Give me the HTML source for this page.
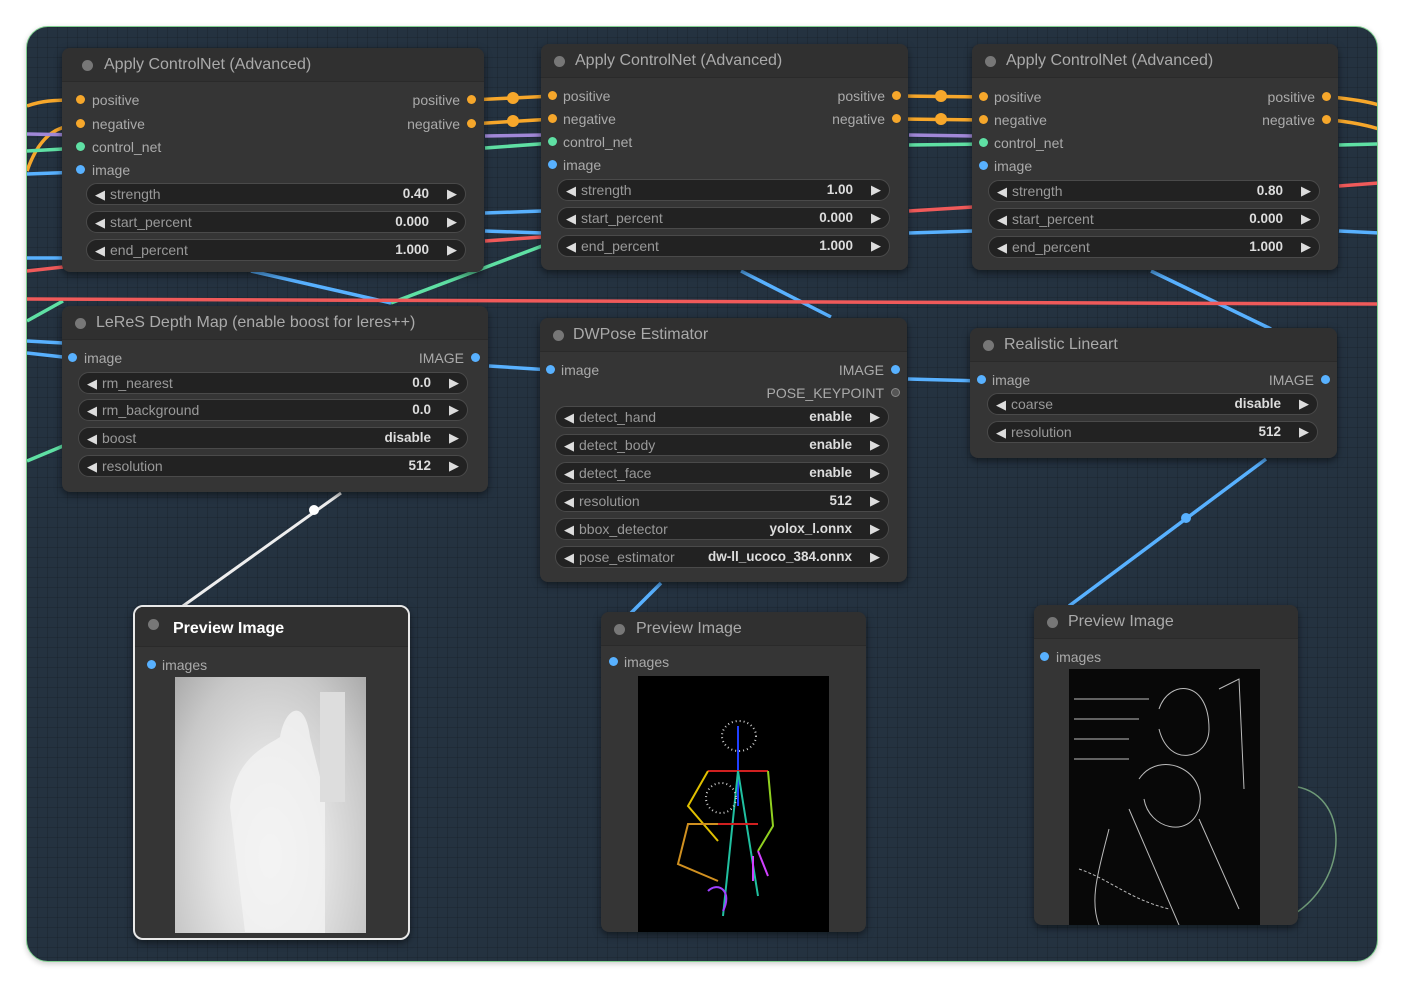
<!DOCTYPE html>
<html><head><meta charset="utf-8"><style>
*{margin:0;padding:0;box-sizing:border-box}
body{width:1404px;height:988px;background:#fff;position:relative;overflow:hidden;font-family:"Liberation Sans",Arial,sans-serif}
#fr{position:absolute;left:26px;top:26px;width:1352px;height:936px;border-radius:22px;border:1px solid #7fcf8f;overflow:hidden;background-color:#243240;
background-image:linear-gradient(rgba(0,0,0,.12) 1px,transparent 1px),linear-gradient(90deg,rgba(0,0,0,.12) 1px,transparent 1px);background-size:10px 10px;box-shadow:0 2px 6px rgba(0,0,0,.2)}
svg.wires{position:absolute;left:0;top:0}
.n{position:absolute;background:#353535;border-radius:8px;box-shadow:0 3px 8px rgba(0,0,0,.5)}
.t{height:34px;background:#303030;border-radius:8px 8px 0 0;border-bottom:1px solid #2a2a2a;color:#aaa;font-size:16px;line-height:34px;padding-left:42px;position:relative}
.t:before{content:"";position:absolute;left:20px;top:12px;width:11px;height:11px;border-radius:50%;background:#777}
.t.s:before{left:13px}
.r{position:absolute;font-size:14px;color:#aaa;line-height:16px}
.d{position:absolute;width:9px;height:9px;border-radius:50%}
.o{background:#f6a72b}.g{background:#5fe0a4}.b{background:#58b1ff}.k{background:#555;border:1px solid #888}
.w{position:absolute;height:22px;border-radius:11px;background:#222;border:1px solid #4a4a4a;font-size:14px;line-height:20px;color:#999}
.w .l{position:absolute;left:8px;top:0;color:#999}
.w .l:before{content:"◀";color:#ddd;margin-right:5px;font-size:13px}
.w .v{position:absolute;right:36px;top:0;color:#ddd;font-weight:bold;font-size:13.5px}
.w .a{position:absolute;right:8px;top:0;color:#ddd;font-size:13px}
.img{position:absolute}
</style></head><body>
<div id="fr">
<svg class="wires" width="1352" height="936" viewBox="26 26 1352 936" fill="none" stroke-width="3.5">
<g stroke="#f6a72b"><path d="M26 105 C40 100 50 99 80 99"/><path d="M26 170 C40 130 60 124 80 124"/><path d="M470 99 L552 95"/><path d="M470 123 L552 118"/><path d="M900 95 L984 96"/><path d="M900 118 L984 119"/><path d="M1330 96 C1350 98 1365 100 1378 104"/><path d="M1330 119 C1350 121 1365 124 1378 128"/></g>
<g fill="#f6a72b" stroke="none"><circle cx="512" cy="97" r="6"/><circle cx="512" cy="120" r="6"/><circle cx="940" cy="95" r="6"/><circle cx="940" cy="118" r="6"/></g>
<g stroke="#a088d8"><path d="M26 133 L80 134"/><path d="M484 135 L541 134"/><path d="M908 134 L972 135"/></g>
<g stroke="#5fe0a4"><path d="M26 150 L80 147"/><path d="M484 147 L552 142"/><path d="M908 144 L984 143"/><path d="M1338 144 L1378 143"/><path d="M26 320 L62 300"/><path d="M390 302 L541 245"/><path d="M26 460 L62 445"/></g>
<g stroke="#58b1ff"><path d="M26 173 L80 171"/><path d="M484 212 L541 210"/><path d="M484 230 L541 232"/><path d="M908 232 L972 230"/><path d="M1338 230 L1378 232"/><path d="M26 257 L62 257"/><path d="M250 270 L390 302"/><path d="M740 270 L830 316"/><path d="M1150 270 L1270 328"/><path d="M26 340 L62 342"/><path d="M26 352 L62 356"/><path d="M488 365 L550 369"/><path d="M907 378 L981 380"/><path d="M660 582 L630 612"/><path d="M1265 458 L1068 605"/></g>
<g stroke="#f05a5a"><path d="M26 270 L62 266"/><path d="M26 298 L1378 303"/><path d="M484 240 L541 236"/><path d="M908 210 L972 206"/><path d="M1338 185 L1378 182"/></g>
<path d="M340 492 L175 610" stroke="#eee" stroke-width="3"/>
<circle cx="313" cy="509" r="5" fill="#fff"/><circle cx="1185" cy="517" r="5" fill="#58b1ff"/>
<g stroke="#6f9a78" stroke-width="1.5"><path d="M62 62 L110 62 C170 80 170 180 110 195 L62 195 L62 185 C100 160 120 130 80 120"/><path d="M1240 915 L1290 915 C1350 880 1350 790 1290 785 L1240 785 M1280 830 C1250 835 1240 850 1260 865 C1280 880 1300 860 1285 835"/></g>
</svg>
</div>

<div class="n" style="left:62px;top:48px;width:422px;height:224px">
<div class="t">Apply ControlNet (Advanced)</div>
<div class="d o" style="left:14px;top:47px"></div><div class="r" style="left:30px;top:44px">positive</div>
<div class="d o" style="left:14px;top:71px"></div><div class="r" style="left:30px;top:68px">negative</div>
<div class="d g" style="left:14px;top:94px"></div><div class="r" style="left:30px;top:91px">control_net</div>
<div class="d b" style="left:14px;top:117px"></div><div class="r" style="left:30px;top:114px">image</div>
<div class="r" style="right:24px;top:44px">positive</div><div class="d o" style="right:8px;top:47px"></div>
<div class="r" style="right:24px;top:68px">negative</div><div class="d o" style="right:8px;top:71px"></div>
<div class="w" style="left:24px;top:135px;width:380px"><span class="l">strength</span><span class="v">0.40</span><span class="a">▶</span></div>
<div class="w" style="left:24px;top:163px;width:380px"><span class="l">start_percent</span><span class="v">0.000</span><span class="a">▶</span></div>
<div class="w" style="left:24px;top:191px;width:380px"><span class="l">end_percent</span><span class="v">1.000</span><span class="a">▶</span></div>
</div>
<div class="n" style="left:541px;top:44px;width:367px;height:226px">
<div class="t s" style="padding-left:34px">Apply ControlNet (Advanced)</div>
<div class="d o" style="left:7px;top:47px"></div><div class="r" style="left:22px;top:44px">positive</div>
<div class="d o" style="left:7px;top:70px"></div><div class="r" style="left:22px;top:67px">negative</div>
<div class="d g" style="left:7px;top:93px"></div><div class="r" style="left:22px;top:90px">control_net</div>
<div class="d b" style="left:7px;top:116px"></div><div class="r" style="left:22px;top:113px">image</div>
<div class="r" style="right:23px;top:44px">positive</div><div class="d o" style="right:7px;top:47px"></div>
<div class="r" style="right:23px;top:67px">negative</div><div class="d o" style="right:7px;top:70px"></div>
<div class="w" style="left:16px;top:135px;width:333px"><span class="l">strength</span><span class="v">1.00</span><span class="a">▶</span></div>
<div class="w" style="left:16px;top:163px;width:333px"><span class="l">start_percent</span><span class="v">0.000</span><span class="a">▶</span></div>
<div class="w" style="left:16px;top:191px;width:333px"><span class="l">end_percent</span><span class="v">1.000</span><span class="a">▶</span></div>
</div>
<div class="n" style="left:972px;top:44px;width:366px;height:226px">
<div class="t s" style="padding-left:34px">Apply ControlNet (Advanced)</div>
<div class="d o" style="left:7px;top:48px"></div><div class="r" style="left:22px;top:45px">positive</div>
<div class="d o" style="left:7px;top:71px"></div><div class="r" style="left:22px;top:68px">negative</div>
<div class="d g" style="left:7px;top:94px"></div><div class="r" style="left:22px;top:91px">control_net</div>
<div class="d b" style="left:7px;top:117px"></div><div class="r" style="left:22px;top:114px">image</div>
<div class="r" style="right:23px;top:45px">positive</div><div class="d o" style="right:7px;top:48px"></div>
<div class="r" style="right:23px;top:68px">negative</div><div class="d o" style="right:7px;top:71px"></div>
<div class="w" style="left:16px;top:136px;width:332px"><span class="l">strength</span><span class="v">0.80</span><span class="a">▶</span></div>
<div class="w" style="left:16px;top:164px;width:332px"><span class="l">start_percent</span><span class="v">0.000</span><span class="a">▶</span></div>
<div class="w" style="left:16px;top:192px;width:332px"><span class="l">end_percent</span><span class="v">1.000</span><span class="a">▶</span></div>
</div>
<div class="n" style="left:62px;top:306px;width:426px;height:186px">
<div class="t s" style="padding-left:34px">LeReS Depth Map (enable boost for leres++)</div>
<div class="d b" style="left:6px;top:47px"></div><div class="r" style="left:22px;top:44px">image</div>
<div class="r" style="right:24px;top:44px">IMAGE</div><div class="d b" style="right:8px;top:47px"></div>
<div class="w" style="left:16px;top:66px;width:390px"><span class="l">rm_nearest</span><span class="v">0.0</span><span class="a">▶</span></div>
<div class="w" style="left:16px;top:93px;width:390px"><span class="l">rm_background</span><span class="v">0.0</span><span class="a">▶</span></div>
<div class="w" style="left:16px;top:121px;width:390px"><span class="l">boost</span><span class="v">disable</span><span class="a">▶</span></div>
<div class="w" style="left:16px;top:149px;width:390px"><span class="l">resolution</span><span class="v">512</span><span class="a">▶</span></div>
</div>
<div class="n" style="left:540px;top:318px;width:367px;height:264px">
<div class="t s" style="padding-left:33px">DWPose Estimator</div>
<div class="d b" style="left:6px;top:47px"></div><div class="r" style="left:21px;top:44px">image</div>
<div class="r" style="right:23px;top:44px">IMAGE</div><div class="d b" style="right:7px;top:47px"></div>
<div class="r" style="right:23px;top:67px">POSE_KEYPOINT</div><div class="d k" style="right:7px;top:70px"></div>
<div class="w" style="left:15px;top:88px;width:334px"><span class="l">detect_hand</span><span class="v">enable</span><span class="a">▶</span></div>
<div class="w" style="left:15px;top:116px;width:334px"><span class="l">detect_body</span><span class="v">enable</span><span class="a">▶</span></div>
<div class="w" style="left:15px;top:144px;width:334px"><span class="l">detect_face</span><span class="v">enable</span><span class="a">▶</span></div>
<div class="w" style="left:15px;top:172px;width:334px"><span class="l">resolution</span><span class="v">512</span><span class="a">▶</span></div>
<div class="w" style="left:15px;top:200px;width:334px"><span class="l">bbox_detector</span><span class="v">yolox_l.onnx</span><span class="a">▶</span></div>
<div class="w" style="left:15px;top:228px;width:334px"><span class="l">pose_estimator</span><span class="v">dw-ll_ucoco_384.onnx</span><span class="a">▶</span></div>
</div>
<div class="n" style="left:970px;top:328px;width:367px;height:130px">
<div class="t s" style="padding-left:34px">Realistic Lineart</div>
<div class="d b" style="left:7px;top:47px"></div><div class="r" style="left:22px;top:44px">image</div>
<div class="r" style="right:23px;top:44px">IMAGE</div><div class="d b" style="right:7px;top:47px"></div>
<div class="w" style="left:17px;top:65px;width:331px"><span class="l">coarse</span><span class="v">disable</span><span class="a">▶</span></div>
<div class="w" style="left:17px;top:93px;width:331px"><span class="l">resolution</span><span class="v">512</span><span class="a">▶</span></div>
</div>
<div class="n" style="left:133px;top:605px;width:277px;height:335px;border:2px solid #e8e8e8;border-radius:10px">
<div class="t s" style="color:#fff;font-weight:bold;height:40px;line-height:44px;padding-left:38px">Preview Image</div>
<div class="d b" style="left:12px;top:53px"></div><div class="r" style="left:27px;top:50px">images</div>
<div class="img" style="left:40px;top:70px;width:191px;height:256px;background:radial-gradient(ellipse at 50% 70%,#f6f6f6 0%,#e2e2e2 40%,#c8c8c8 75%,#aaa 100%)">
<svg width="191" height="256"><path d="M70 255 L55 130 C60 80 90 70 105 60 C110 30 130 20 135 60 L150 120 L150 256 Z" fill="#f2f2f2" opacity=".8"/><rect x="145" y="15" width="25" height="110" fill="#ddd"/></svg></div>
</div>
<div class="n" style="left:601px;top:612px;width:265px;height:320px">
<div class="t s" style="padding-left:35px">Preview Image</div>
<div class="d b" style="left:8px;top:45px"></div><div class="r" style="left:23px;top:42px">images</div>
<div class="img" style="left:37px;top:64px;width:191px;height:256px;background:#000">
<svg width="191" height="256" fill="none" stroke-width="2"><path d="M100 50 L100 130" stroke="#2040ff"/><path d="M70 95 L100 95 L130 95" stroke="#d02020"/><path d="M70 95 L50 130 L80 165" stroke="#e0c000"/><path d="M130 95 L135 150 L120 175" stroke="#90d020"/><path d="M80 148 L50 148 L40 188 L80 205" stroke="#d09020"/><path d="M100 95 L85 240 M100 95 L120 220" stroke="#20c0a0"/><path d="M80 148 L120 148" stroke="#d02020"/><path d="M70 215 C80 205 95 215 85 235" stroke="#a040ff"/><path d="M120 175 L130 200 M115 180 L115 205" stroke="#d040ff"/><ellipse cx="101" cy="60" rx="17" ry="15" stroke="#ccc" stroke-dasharray="1 3"/><ellipse cx="83" cy="122" rx="15" ry="15" stroke="#ccc" stroke-dasharray="1 3"/></svg></div>
</div>
<div class="n" style="left:1034px;top:605px;width:264px;height:320px">
<div class="t s" style="padding-left:34px">Preview Image</div>
<div class="d b" style="left:6px;top:47px"></div><div class="r" style="left:22px;top:44px">images</div>
<div class="img" style="left:35px;top:64px;width:191px;height:256px;background:#080808">
<svg width="191" height="256" fill="none" stroke="#bbb" stroke-width="1"><path d="M5 30 H80 M5 50 H70 M5 70 H60 M5 90 H60"/><path d="M90 40 C100 10 140 10 140 60 C140 90 100 100 90 60"/><path d="M70 110 C90 80 140 100 130 140 C120 170 80 160 75 130"/><path d="M40 160 C30 200 20 230 30 256 M60 140 L110 256 M130 150 L170 240 M150 20 L170 10 L175 120"/><path d="M10 200 C40 210 60 230 100 240" stroke-dasharray="3 2"/></svg></div>
</div>
</body></html>
